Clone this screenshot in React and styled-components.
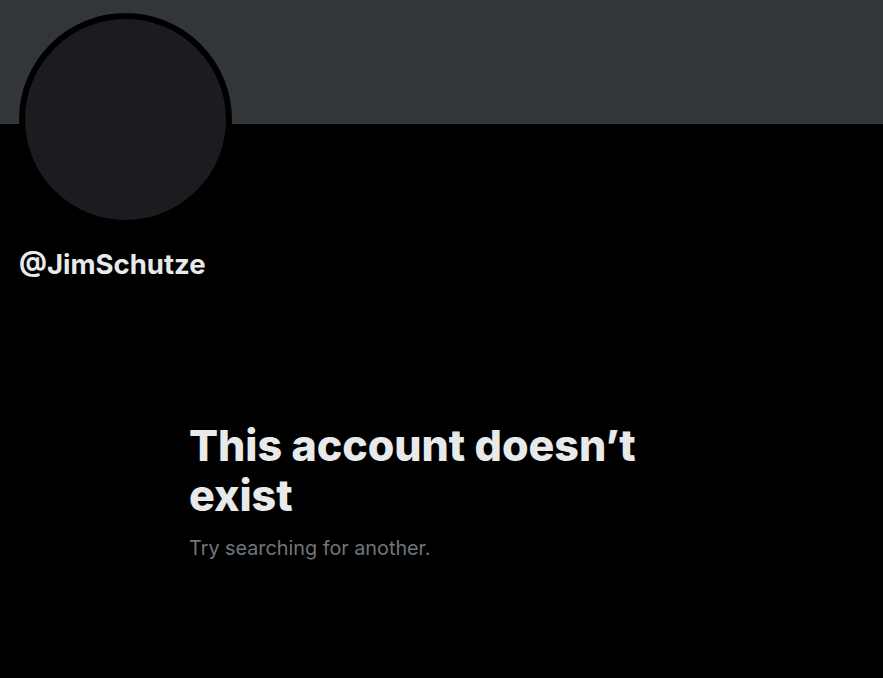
import styled, { createGlobalStyle } from "styled-components";

const GlobalStyle = createGlobalStyle`
  html, body {
    margin: 0;
    padding: 0;
    background: #000;
  }
  body {
    font-family: Inter, "Noto Sans", "Liberation Sans", sans-serif;
    color: #e7e9ea;
  }
`;

const Page = styled.div`
  width: 883px;
  height: 678px;
  background: #000;
  overflow: hidden;
  display: flex;
  flex-direction: column;
`;

const Banner = styled.div`
  height: 124px;
  background: #333639;
  flex-shrink: 0;
`;

const ProfileHead = styled.div`
  padding: 0 19px;
  display: flex;
  flex-direction: column;
  align-items: flex-start;
`;

const Avatar = styled.div`
  width: 201px;
  height: 201px;
  margin-top: -111px;
  border: 6px solid #000;
  border-radius: 50%;
  background: #1b1c1f;
`;

const Handle = styled.div`
  margin-top: 21px;
  font-size: 27.5px;
  line-height: 34px;
  font-weight: 700;
  color: #e7e9ea;
`;

const EmptyState = styled.div`
  padding: 139px 0 0 189px;
  display: flex;
  flex-direction: column;
  max-width: 470px;
`;

const Title = styled.h1`
  margin: 0;
  font-size: 43px;
  line-height: 50px;
  font-weight: 800;
  letter-spacing: -0.05px;
  color: #e7e9ea;
`;

const Subtitle = styled.p`
  margin: 14px 0 0;
  font-size: 19.8px;
  line-height: 28px;
  font-weight: 400;
  color: #71767b;
`;

export default function App() {
  return (
    <>
      <GlobalStyle />
      <Page>
        <Banner />
        <ProfileHead>
          <Avatar />
          <Handle>@JimSchutze</Handle>
        </ProfileHead>
        <EmptyState>
          <Title>This account doesn’t exist</Title>
          <Subtitle>Try searching for another.</Subtitle>
        </EmptyState>
      </Page>
    </>
  );
}
